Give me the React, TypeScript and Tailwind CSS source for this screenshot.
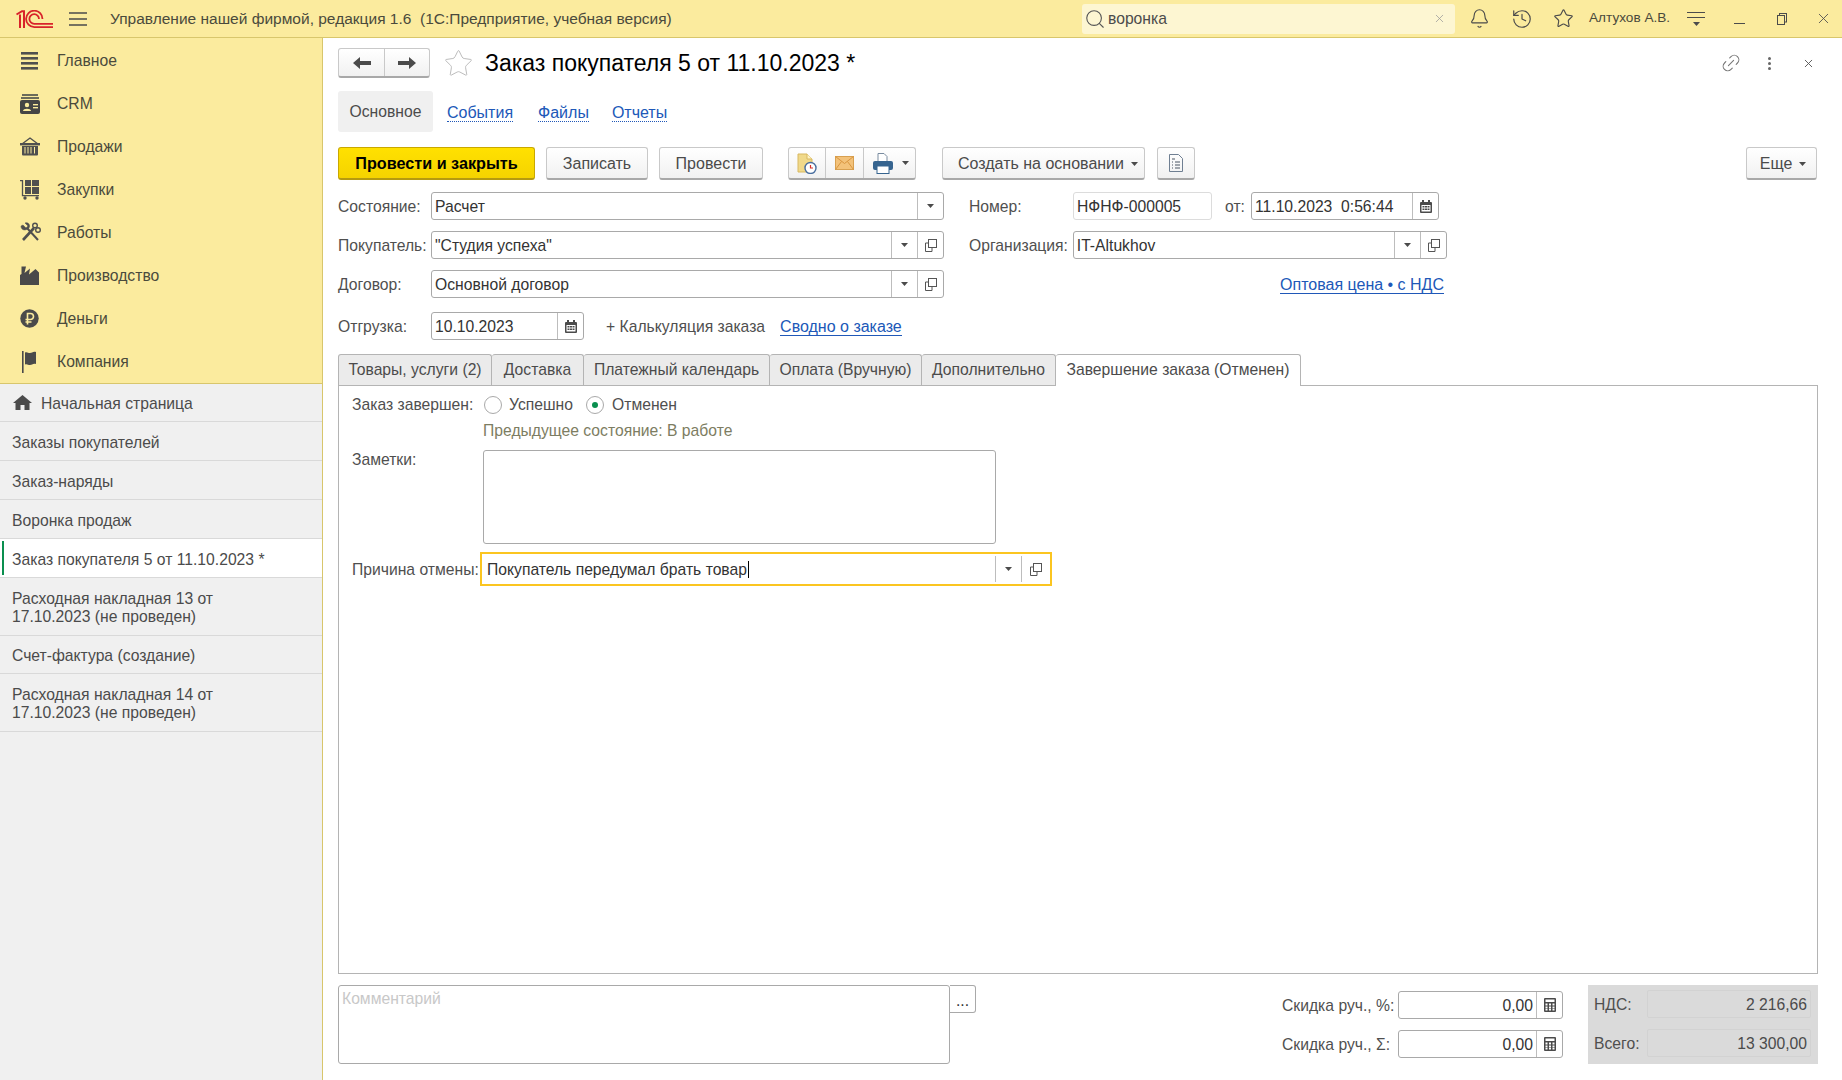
import type { ReactNode } from "react";
import { X, Bell, History, Star, Link2, Search } from "lucide-react";

const navItems: [string, ReactNode][] = [
  ["Главное", <MenuIcon key="m" />],
  ["CRM", <CrmIcon key="c" />],
  ["Продажи", <BasketIcon key="b" />],
  ["Закупки", <CartIcon key="z" />],
  ["Работы", <ToolsIcon key="r" />],
  ["Производство", <FactoryIcon key="p" />],
  ["Деньги", <RubleIcon key="d" />],
  ["Компания", <FlagIcon key="k" />],
];

const openItems = [
  { text: "Заказы покупателей", h: "h-[39px]" },
  { text: "Заказ-наряды", h: "h-[39px]" },
  { text: "Воронка продаж", h: "h-[39px]" },
  { text: "Заказ покупателя 5 от 11.10.2023 *", h: "h-[39px]", active: true },
  { text: "Расходная накладная 13 от\n17.10.2023 (не проведен)", h: "h-[58px]" },
  { text: "Счет-фактура (создание)", h: "h-[38px]" },
  { text: "Расходная накладная 14 от\n17.10.2023 (не проведен)", h: "h-[58px]" },
];

const tabs = [
  { text: "Товары, услуги (2)", w: "w-[154px]" },
  { text: "Доставка", w: "w-[92px]" },
  { text: "Платежный календарь", w: "w-[186px]" },
  { text: "Оплата (Вручную)", w: "w-[152px]" },
  { text: "Дополнительно", w: "w-[134px]" },
];

function MenuIcon() {
  return (
    <svg width="20" height="20" viewBox="0 0 20 20" fill="#4f4f4f">
      <rect x="1" y="1" width="17" height="2.6" />
      <rect x="1" y="6" width="17" height="2.6" />
      <rect x="1" y="11" width="17" height="2.6" />
      <rect x="1" y="16" width="17" height="2.6" />
    </svg>
  );
}

function CrmIcon() {
  return (
    <svg width="20" height="20" viewBox="0 0 20 20">
      <rect x="2" y="0" width="16" height="2" fill="#6b6b5a" />
      <rect x="1" y="3" width="18" height="2" fill="#6b6b5a" />
      <rect x="0" y="6" width="20" height="14" rx="2" fill="#454545" />
      <circle cx="7" cy="11" r="2.2" fill="#fbeb9e" />
      <path d="M3 17c0-3 8-3 8 0z" fill="#fbeb9e" />
      <rect x="13" y="10" width="5" height="1.4" fill="#fbeb9e" />
      <rect x="13" y="13" width="5" height="1.4" fill="#fbeb9e" />
    </svg>
  );
}

function BasketIcon() {
  return (
    <svg width="20" height="20" viewBox="0 0 20 20">
      <path d="M2 7 10 1l8 6" fill="none" stroke="#4f4f4f" strokeWidth="1.4" />
      <rect x="0" y="6" width="20" height="2.4" fill="#4f4f4f" />
      <path d="M2 9h16v8.5a1 1 0 0 1-1 1H3a1 1 0 0 1-1-1z" fill="#4f4f4f" />
      <path d="M5 10v6.5M8 10v6.5M11 10v6.5M14.500 10v6.5" stroke="#fbeb9e" strokeWidth="1" />
    </svg>
  );
}

function CartIcon() {
  return (
    <svg width="20" height="20" viewBox="0 0 20 20" fill="#4f4f4f">
      <path d="M0 .7h2.500v15H19" fill="none" stroke="#4f4f4f" strokeWidth="1.3" />
      <rect x="5" y="0" width="6" height="6" />
      <rect x="12" y="0" width="7" height="6" />
      <rect x="5" y="7" width="6" height="7" />
      <rect x="12" y="7" width="7" height="7" />
      <circle cx="5" cy="18" r="1.700" />
      <circle cx="17" cy="18" r="1.700" />
    </svg>
  );
}

function ToolsIcon() {
  return (
    <svg width="21" height="21" viewBox="0 0 21 21" fill="none" stroke="#4f4f4f">
      <path d="M3 18 14 6" strokeWidth="2.600" />
      <path d="M18 18 7 6" strokeWidth="2" />
      <path d="M3 3l3 3 2-2-3-3c3-1 5 1 4.500 4L8 7 5 8C2 8 1 6 1 4z" fill="#4f4f4f" strokeWidth=".5" />
      <circle cx="15" cy="3.500" r="2.300" strokeWidth="1.400" />
      <circle cx="18" cy="8" r="2.300" strokeWidth="1.400" />
    </svg>
  );
}

function FactoryIcon() {
  return (
    <svg width="19" height="19" viewBox="0 0 19 19" fill="#4a4a4a">
      <path d="M0 19V9l1.500-1V.5H6L4.500 7 10 2.500 9 8.500l6.500-5.500L19 6.500V19z" />
    </svg>
  );
}

function RubleIcon() {
  return (
    <svg width="19" height="19" viewBox="0 0 19 19">
      <circle cx="9.500" cy="9.500" r="9.200" fill="#4a4a4a" />
      <path d="M7.500 15.500V4.500h3a2.800 2.800 0 0 1 0 6h-5M5.500 13h6" fill="none" stroke="#fbeb9e" strokeWidth="1.600" />
    </svg>
  );
}

function FlagIcon() {
  return (
    <svg width="18" height="22" viewBox="0 0 18 22" fill="#4a4a4a">
      <rect x="2" y="0" width="1.600" height="22" />
      <path d="M5 1.500c2-1 3 .5 5 .5s3-2 6-1v12c-3-1-4 1-6 1s-3-1.500-5-.5z" />
    </svg>
  );
}

function Caret({ color = "#4b4b4b" }: { color?: string }) {
  return (
    <svg width="7" height="4" viewBox="0 0 7 4" fill={color}>
      <path d="M0 0h7L3.500 4z" />
    </svg>
  );
}

function OpenIcon() {
  return (
    <svg width="12" height="13" viewBox="0 0 12 13" fill="none" stroke="#555">
      <rect x="3.500" y=".5" width="8" height="8" />
      <path d="M3 4H.5v8.500H7V9" />
    </svg>
  );
}

function CalendarIcon() {
  return (
    <svg width="12" height="13" viewBox="0 0 12 13" fill="#4b4b4b">
      <path d="M1 2h1V0h2v2h4V0h2v2h1a1 1 0 0 1 1 1v9a1 1 0 0 1-1 1H1a1 1 0 0 1-1-1V3a1 1 0 0 1 1-1z" />
      <path d="M1.500 5h9v6.500h-9z" fill="#fff" />
      <path d="M2.500 6h2v1.500h-2zM5 6h2v1.500H5zM7.500 6h2v1.500h-2zM2.500 8.500h2V10h-2zM5 8.500h2V10H5zM7.500 8.500h2V10h-2z" />
    </svg>
  );
}

function CalcIcon() {
  return (
    <svg width="12" height="14" viewBox="0 0 12 14" fill="#4b4b4b">
      <path d="M1 0h10a1 1 0 0 1 1 1v12a1 1 0 0 1-1 1H1a1 1 0 0 1-1-1V1a1 1 0 0 1 1-1z" />
      <path d="M1.500 1.500h9v2.500h-9zM1.500 5.500h2v2h-2zM5 5.500h2v2H5zM8.500 5.500h2v2h-2zM1.500 8.500h2v2h-2zM5 8.500h2v2H5zM8.500 8.500h2v2h-2zM1.500 11h2v1.500h-2zM5 11h2v1.500H5zM8.500 11h2v1.500h-2z" fill="#fff" />
    </svg>
  );
}

function Btn({ children, className = "" }: { children: ReactNode; className?: string }) {
  return (
    <div
      className={`flex h-[33px] items-center justify-center rounded-[3px] border border-[#c9c9c9] border-b-2 border-b-[#a8a8a8] bg-linear-to-b from-white to-[#f1f1f1] text-[16px] text-[#4b4b4b] ${className}`}
    >
      {children}
    </div>
  );
}

// поле ввода с кнопками справа
function Field({
  value,
  className = "",
  buttons,
  pad = "pl-[3px]",
}: {
  value: string;
  className?: string;
  buttons: ReactNode[];
  pad?: string;
}) {
  return (
    <div className={`flex h-[28px] items-stretch rounded-[3px] border border-[#a9a9a9] bg-white ${className}`}>
      <div className={`flex-1 overflow-hidden pt-[1px] leading-[25px] whitespace-pre text-[#333] ${pad}`}>{value}</div>
      {buttons.map((b, i) => (
        <div key={i} className="flex w-[26px] items-center justify-center border-l border-[#bdbdbd]">
          {b}
        </div>
      ))}
    </div>
  );
}

function Label({ children, className = "" }: { children: ReactNode; className?: string }) {
  return <div className={`whitespace-nowrap pt-[2px] text-[#4f4f4f] ${className}`}>{children}</div>;
}

function Radio({ checked }: { checked?: boolean }) {
  return (
    <div className="flex h-[18px] w-[18px] flex-none items-center justify-center rounded-full border border-[#a9a9a9] bg-white">
      {checked && <div className="h-[6px] w-[6px] rounded-full bg-[#0a8f4f]" />}
    </div>
  );
}

function Sidebar() {
  return (
    <aside className="flex h-full w-[323px] flex-none flex-col border-r border-[#d8c66c] bg-[#f0f0f0]">
      <div className="h-[346px] flex-none border-b border-[#d8c66c] bg-[#fbeb9e]">
        <div className="h-[1px]" />
        {navItems.map(([name, icon]) => (
          <div key={name} className="flex h-[43px] items-center">
            <div className="flex w-[57px] flex-none pl-[20px]">{icon}</div>
            <span className="text-[#4a4a3c]">{name}</span>
          </div>
        ))}
      </div>
      <div className="flex h-[38px] flex-none items-center border-b border-[#d9d9d9] pl-[13px]">
        <svg width="19" height="15" viewBox="0 0 19 15" fill="#4b4b4b">
          <path d="M9.500 0 19 8h-2.500v7H11.500v-5h-4v5H2.500V8H0z" />
        </svg>
        <span className="ml-[9px] pt-[3px] text-[#4b4b4b]">Начальная страница</span>
      </div>
      {openItems.map((it) => (
        <div
          key={it.text}
          className={`flex flex-none items-center border-b border-[#d9d9d9] pl-[12px] ${it.h} ${it.active ? "bg-white" : ""}`}
        >
          {it.active && <div className="-ml-[10px] mr-[8px] h-[34px] w-[2px] bg-[#0a8f4f]" />}
          <span className="whitespace-pre-line pt-[3px] leading-[18px] text-[#4b4b4b]">{it.text}</span>
        </div>
      ))}
    </aside>
  );
}

function TopBar() {
  return (
    <header className="flex h-[38px] flex-none items-center border-b border-[#d8c66c] bg-[#fbeb9e]">
      <svg className="ml-[16px]" width="37" height="18" viewBox="0 0 37 18" fill="none" stroke="#d8232a" strokeWidth="1.800">
        <path d="M.5 4.500 6 1.200h2V18M4 4.500V18" strokeWidth="2" />
        <path d="M26.500 9A8.200 8.200 0 1 0 18.300 17.100H37" />
        <path d="M23 9A4.800 4.800 0 1 0 18.300 13.800H37" />
      </svg>
      <svg className="ml-[16px]" width="18" height="14" viewBox="0 0 18 14" stroke="#4b4b4b" strokeWidth="1.300">
        <path d="M0 1h18M0 7h18M0 13h18" />
      </svg>
      <span className="ml-[23px] w-[972px] flex-none whitespace-pre text-[15.5px] text-[#4a4a3c]">Управление нашей фирмой, редакция 1.6  (1С:Предприятие, учебная версия)</span>
      <div className="flex h-[30px] w-[373px] flex-none items-center rounded-[3px] bg-[#fdf6d2] pl-[2px] pr-[9px]">
        <Search size={22} strokeWidth={1.200} color="#555" />
        <span className="ml-[2px] flex-1 text-[#4b4b4b]">воронка</span>
        <X size={13} strokeWidth={1.400} color="#9a9a9a" />
      </div>
      <Bell className="ml-[14px]" size={21} strokeWidth={1.300} color="#4b4b4b" />
      <History className="ml-[21px]" size={22} strokeWidth={1.300} color="#4b4b4b" />
      <Star className="ml-[20px]" size={21} strokeWidth={1.300} color="#4b4b4b" />
      <span className="ml-[15px] w-[82px] whitespace-nowrap text-[13.6px] text-[#4a4a3c]">Алтухов А.В.</span>
      <div className="ml-[16px] flex w-[18px] flex-col items-center gap-[4px]">
        <div className="h-[1px] w-[18px] bg-[#4b4b4b]" />
        <div className="h-[1px] w-[18px] bg-[#4b4b4b]" />
        <Caret />
      </div>
      <div className="ml-[29px] mt-[10px] h-[1px] w-[11px] bg-[#4b4b4b]" />
      <svg className="ml-[32px]" width="10" height="12" viewBox="0 0 10 12" fill="none" stroke="#4b4b4b">
        <rect x="2.500" y=".5" width="7" height="8.500" />
        <rect x=".5" y="2.500" width="7" height="9" fill="#fbeb9e" />
      </svg>
      <X className="ml-[28px]" size={17} strokeWidth={1.200} color="#4b4b4b" />
    </header>
  );
}

function Header() {
  return (
    <div className="mt-[10px] flex h-[30px] flex-none items-center">
      <div className="flex h-[30px] w-[92px] items-center rounded-[3px] border border-[#c9c9c9] border-b-2 border-b-[#a8a8a8] bg-linear-to-b from-white to-[#f1f1f1]">
        <div className="flex h-full w-[46px] items-center justify-center border-r border-[#c9c9c9]">
          <svg width="18" height="14" viewBox="0 0 18 14" fill="#4b4b4b">
            <path d="M0 7 7 1v4h11v4H7v4z" />
          </svg>
        </div>
        <div className="flex flex-1 justify-center">
          <svg width="18" height="14" viewBox="0 0 18 14" fill="#4b4b4b">
            <path d="M18 7 11 1v4H0v4h11v4z" />
          </svg>
        </div>
      </div>
      <Star className="ml-[13px]" size={31} strokeWidth={0.700} color="#b5b5b5" />
      <h1 className="ml-[11px] text-[23px] text-black">Заказ покупателя 5 от 11.10.2023 *</h1>
      <div className="flex-1" />
      <Link2 className="-rotate-45" size={22} strokeWidth={1.200} color="#777" />
      <div className="ml-[26px] flex flex-col gap-[2px]">
        <div className="h-[3px] w-[3px] rounded-full bg-[#666]" />
        <div className="h-[3px] w-[3px] rounded-full bg-[#666]" />
        <div className="h-[3px] w-[3px] rounded-full bg-[#666]" />
      </div>
      <X className="ml-[31px] mr-[3px]" size={13} strokeWidth={1.700} color="#555" />
    </div>
  );
}

function SectionTabs() {
  return (
    <div className="mt-[13px] flex h-[41px] flex-none items-center">
      <div className="flex h-[41px] w-[95px] items-center justify-center rounded-[3px] bg-[#f0f0f0] pt-[1px] text-[#4b4b4b]">Основное</div>
      {[
        ["События", "ml-[14px]"],
        ["Файлы", "ml-[25px]"],
        ["Отчеты", "ml-[23px]"],
      ].map(([t, m]) => (
        <span key={t} className={`${m} mt-[2px] border-b border-dotted border-[#2058b8] text-[16px] leading-[17px] text-[#2058b8]`}>
          {t}
        </span>
      ))}
    </div>
  );
}

function CommandBar() {
  return (
    <div className="mt-[15px] flex h-[33px] flex-none">
      <div className="flex h-[33px] w-[197px] items-center justify-center rounded-[3px] border border-[#c9a800] border-b-2 border-b-[#b59a10] bg-linear-to-b from-[#ffe100] to-[#f5d300] text-[16.2px] font-bold text-black">
        Провести и закрыть
      </div>
      <Btn className="ml-[11px] w-[102px] pt-[2px]">Записать</Btn>
      <Btn className="ml-[11px] w-[104px] pt-[2px]">Провести</Btn>
      <Btn className="ml-[25px] w-[128px] !justify-start">
        <div className="flex h-full w-[37px] items-center justify-center border-r border-[#c9c9c9]">
          <svg width="20" height="21" viewBox="0 0 20 21">
            <path d="M1 1h9l5 5v13H1z" fill="#f0d98a" stroke="#d8b860" />
            <path d="M10 1v5h5" fill="#fff3c4" stroke="#d8b860" />
            <circle cx="13.500" cy="15" r="5.500" fill="#fff" stroke="#4a6f9f" strokeWidth="1.400" />
            <path d="M13.500 12v3h2.500" fill="none" stroke="#d8332a" strokeWidth="1.200" />
          </svg>
        </div>
        <div className="flex h-full w-[38px] items-center justify-center border-r border-[#c9c9c9]">
          <svg width="19" height="14" viewBox="0 0 19 14">
            <rect x=".5" y=".5" width="18" height="13" fill="#f3c27a" stroke="#d8a050" />
            <path d="M.5 .5l9 7 9-7M.5 13.500l6-8M18.500 13.500l-6-8" fill="none" stroke="#d8953f" />
          </svg>
        </div>
        <div className="flex flex-1 items-center pl-[9px]">
          <svg width="20" height="21" viewBox="0 0 20 21">
            <path d="M5 .5h6l3 3v5H5z" fill="#fff" stroke="#7a8ca0" />
            <rect x="0" y="8" width="20" height="9" rx="2" fill="#36648f" />
            <rect x="4" y="13" width="12" height="7.500" fill="#fff" stroke="#36648f" />
          </svg>
          <div className="ml-[9px] mb-[1px]">
            <Caret />
          </div>
        </div>
      </Btn>
      <Btn className="ml-[26px] w-[203px] gap-[7px] pt-[2px] pl-[9px]">
        Создать на основании <Caret />
      </Btn>
      <Btn className="ml-[12px] w-[38px]">
        <svg width="14" height="18" viewBox="0 0 14 18" fill="none" stroke="#6f7f92">
          <path d="M.5 .5h9l4 4v13H.5z" />
          <path d="M3 5h3M3 8h1M6 8h5M3 11h1M6 11h5M3 14h1M6 14h5" stroke="#4b5563" />
        </svg>
      </Btn>
      <div className="flex-1" />
      <Btn className="mr-[1px] w-[71px] gap-[7px] pt-[2px] pl-[3px]">
        Еще <Caret />
      </Btn>
    </div>
  );
}

function HeaderForm() {
  return (
    <div className="mt-[12px] flex h-[148px] flex-none">
      <div className="flex w-[606px] flex-none flex-col">
        <div className="flex h-[28px] items-center">
          <Label className="w-[93px]">Состояние:</Label>
          <Field className="flex-1" value="Расчет" buttons={[<Caret key="c" />]} />
        </div>
        <div className="mt-[11px] flex h-[28px] items-center">
          <Label className="w-[93px]">Покупатель:</Label>
          <Field className="flex-1" value={'"Студия успеха"'} buttons={[<Caret key="c" />, <OpenIcon key="o" />]} />
        </div>
        <div className="mt-[11px] flex h-[28px] items-center">
          <Label className="w-[93px]">Договор:</Label>
          <Field className="flex-1" value="Основной договор" buttons={[<Caret key="c" />, <OpenIcon key="o" />]} />
        </div>
        <div className="mt-[14px] flex h-[28px] items-center">
          <Label className="w-[93px]">Отгрузка:</Label>
          <Field className="w-[153px]" value="10.10.2023" buttons={[<CalendarIcon key="k" />]} />
          <span className="ml-[22px] pt-[2px] text-[#4f4f4f]">+ Калькуляция заказа</span>
          <span className="ml-[15px] mt-[2px] border-b border-[#2058b8] text-[16px] leading-[17px] text-[#2058b8]">Сводно о заказе</span>
        </div>
      </div>
      <div className="ml-[25px] flex w-[478px] flex-none flex-col">
        <div className="flex h-[28px] items-center">
          <Label className="w-[104px]">Номер:</Label>
          <div className="h-[28px] w-[139px] rounded-[3px] border border-[#dcdcdc] pl-[3px] pt-[1px] leading-[25px] text-[#333]">НФНФ-000005</div>
          <Label className="ml-[13px] w-[26px]">от:</Label>
          <Field className="w-[188px]" value="11.10.2023  0:56:44" buttons={[<CalendarIcon key="k" />]} />
        </div>
        <div className="mt-[11px] flex h-[28px] items-center">
          <Label className="w-[104px]">Организация:</Label>
          <Field className="w-[375px]" value="IT-Altukhov" buttons={[<Caret key="c" />, <OpenIcon key="o" />]} />
        </div>
        <div className="mt-[11px] flex h-[28px] items-center justify-end pr-[3px]">
          <span className="mt-[2px] border-b border-[#2058b8] text-[16px] leading-[17px] text-[#2058b8]">Оптовая цена • с НДС</span>
        </div>
      </div>
    </div>
  );
}

function OrderTabs() {
  return (
    <div className="mt-[14px] flex h-[31px] flex-none">
      {tabs.map((t, i) => (
        <div
          key={t.text}
          className={`${t.w} flex h-[31px] items-center justify-center rounded-t-[3px] border-t border-r border-[#b4b4b4] bg-[#ebebeb] text-[#4b4b4b] ${i === 0 ? "border-l" : ""}`}
        >
          {t.text}
        </div>
      ))}
      <div className="relative z-10 flex h-[32px] w-[245px] items-center justify-center rounded-t-[3px] border-t border-r border-[#b4b4b4] bg-white pb-[1px] text-[#4b4b4b]">
        Завершение заказа (Отменен)
      </div>
    </div>
  );
}

function OrderPanel() {
  return (
    <div className="min-h-0 flex-1 border border-[#b4b4b4] bg-white">
      <div className="mt-[9px] flex h-[20px] items-center pl-[13px]">
        <Label className="w-[132px] !pt-0">Заказ завершен:</Label>
        <Radio />
        <span className="ml-[7px] w-[77px] text-[#4f4f4f]">Успешно</span>
        <Radio checked />
        <span className="ml-[8px] text-[#4f4f4f]">Отменен</span>
      </div>
      <div className="mt-[6px] h-[20px] pl-[144px] leading-[20px] text-[#7d7d62]">Предыдущее состояние: В работе</div>
      <div className="mt-[9px] flex pl-[13px]">
        <Label className="w-[131px] !pt-0 leading-[20px]">Заметки:</Label>
        <div className="h-[94px] w-[513px] rounded-[3px] border border-[#a9a9a9]" />
      </div>
      <div className="mt-[8px] flex items-center pl-[13px]">
        <Label className="w-[128px]">Причина отмены:</Label>
        <div className="flex h-[34px] w-[572px] items-center border-2 border-[#fbc520] pl-[5px] text-[#333]">
          <span className="flex-1 pt-[2px]">
            Покупатель передумал брать товар<span className="ml-px inline-block h-[17px] w-px bg-black align-text-bottom" />
          </span>
          <div className="flex h-[26px] w-[26px] items-center justify-center border-l border-[#bdbdbd]">
            <Caret />
          </div>
          <div className="flex h-[26px] w-[29px] items-center justify-center border-l border-[#bdbdbd]">
            <OpenIcon />
          </div>
        </div>
      </div>
    </div>
  );
}

function Footer() {
  return (
    <div className="mt-[11px] mb-[16px] flex h-[79px] flex-none">
      <div className="h-[79px] w-[612px] rounded-[3px] border border-[#a9a9a9] pl-[3px] leading-[26px] text-[#c8c8c8]">Комментарий</div>
      <div className="flex h-[28px] w-[26px] items-center justify-center rounded-r-[3px] border border-l-0 border-[#a9a9a9] pt-[3px] text-[#333]">...</div>
      <div className="w-[306px] flex-none" />
      <div className="flex w-[306px] flex-none flex-col pt-[6px]">
        <div className="flex h-[28px] items-center">
          <Label className="w-[116px]">Скидка руч., %:</Label>
          <Field className="w-[165px]" pad="pr-[3px] text-right" value="0,00" buttons={[<CalcIcon key="k" />]} />
        </div>
        <div className="mt-[11px] flex h-[28px] items-center">
          <Label className="w-[116px]">Скидка руч., Σ:</Label>
          <Field className="w-[165px]" pad="pr-[3px] text-right" value="0,00" buttons={[<CalcIcon key="k" />]} />
        </div>
      </div>
      <div className="flex h-[79px] flex-1 flex-col bg-[#dadada] pl-[6px] pt-[5px] pr-[7px]">
        <div className="flex h-[28px] items-center">
          <span className="w-[53px] pt-[2px] text-[#4f4f4f]">НДС:</span>
          <div className="h-[28px] flex-1 rounded-[2px] border border-[#d2d2d2] pt-[1px] pr-[3px] text-right leading-[25px] text-[#4b4b4b]">2 216,66</div>
        </div>
        <div className="mt-[11px] flex h-[28px] items-center">
          <span className="w-[53px] pt-[2px] text-[#4f4f4f]">Всего:</span>
          <div className="h-[28px] flex-1 rounded-[2px] border border-[#d2d2d2] pt-[1px] pr-[3px] text-right leading-[25px] text-[#4b4b4b]">13 300,00</div>
        </div>
      </div>
    </div>
  );
}

export default function App() {
  return (
    <div className="flex h-screen w-full flex-col overflow-hidden bg-white font-['Liberation_Sans',Arial,sans-serif] text-[15.7px]">
      <TopBar />
      <div className="flex min-h-0 flex-1">
        <Sidebar />
        <main className="flex min-w-0 flex-1 flex-col pr-[24px] pl-[15px]">
          <Header />
          <SectionTabs />
          <CommandBar />
          <HeaderForm />
          <OrderTabs />
          <OrderPanel />
          <Footer />
        </main>
      </div>
    </div>
  );
}
